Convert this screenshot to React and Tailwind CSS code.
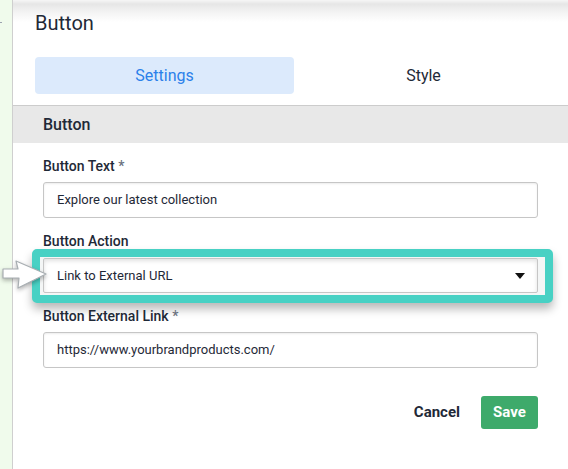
import React from "react";

function Field({ label, required, children, className = "" }) {
  return (
    <div className={className}>
      <div className="text-[14px] leading-[16px] font-medium text-[#1f2937]">
        {label}
        {required && <span className="text-[#6b7280]"> *</span>}
      </div>
      {children}
    </div>
  );
}

function TextInput({ value, className = "" }) {
  return (
    <div
      className={`h-[36px] flex items-center pl-[13px] border border-[#c6c6c6] rounded-[3px] bg-white shadow-[inset_0_1px_2px_rgba(0,0,0,0.08)] text-[13px] text-[#1f2937] ${className}`}
    >
      {value}
    </div>
  );
}

export default function App() {
  return (
    <div
      className="w-[568px] h-[469px] flex overflow-hidden bg-white relative"
      style={{ fontFamily: "Roboto, 'Liberation Sans', sans-serif" }}
    >
      {/* left strip */}
      <div className="w-[13px] shrink-0 bg-[#f0fbec] border-r border-[#cfcfcf] pt-[22px]">
        <div className="w-[2px] h-[1px] bg-[#9ca3af]" />
      </div>

      {/* main panel */}
      <div className="flex-1 flex flex-col bg-[linear-gradient(to_bottom,#f6f6f6_0px,#e6e6e6_4px,#f3f3f3_12px,#ffffff_22px)] bg-no-repeat">
        <div className="pl-[22px] pt-[11px] text-[20px] leading-[24px] text-[#1f2937]">
          Button
        </div>

        <div className="mt-[22px] ml-[22px] mr-[15px] grid grid-cols-2 h-[37px] text-[16px]">
          <div className="bg-[#dceafc] rounded-[4px] flex items-center justify-center text-[#2b80ea]">
            Settings
          </div>
          <div className="flex items-center justify-center text-[#1f2937]">Style</div>
        </div>

        <div className="mt-[11px] h-[38px] border-t border-[#cccccc] bg-[#e8e8e8] flex items-center pl-[30px] text-[16px] font-medium text-[#1f2937]">
          Button
        </div>

        <div className="px-[30px] pt-[15px] flex flex-col">
          <Field label="Button Text" required>
            <TextInput className="mt-[8px]" value="Explore our latest collection" />
          </Field>

          <Field label="Button Action" className="mt-[15px]">
            <div className="ml-[-11px] mr-[-15px] border-[8px] border-[#48d1c4] rounded-[5px] pl-[3px] pr-[7px] pt-[1px] pb-[2px] bg-[#f4f6f6] shadow-[0_6px_10px_rgba(0,0,0,0.28)]">
              <div className="h-[35px] flex items-center justify-between pl-[13px] pr-[12px] border border-[#c6c6c6] rounded-[2px] bg-white shadow-[inset_0_2px_4px_rgba(0,0,0,0.12)] text-[13px] text-[#1f2937]">
                <span>Link to External URL</span>
                <svg width="10" height="6" viewBox="0 0 10 6">
                  <path d="M0 0 L10 0 L5 6 Z" fill="#111111" />
                </svg>
              </div>
            </div>
          </Field>

          <Field label="Button External Link" required className="mt-[5px]">
            <TextInput className="mt-[8px]" value="https://www.yourbrandproducts.com/" />
          </Field>

          <div className="mt-[28px] flex items-center justify-end gap-[21px]">
            <span className="text-[15px] font-bold text-[#1f2937]">Cancel</span>
            <div className="w-[57px] h-[33px] rounded-[3px] bg-[#3eaa6b] flex items-center justify-center text-[15px] font-bold text-white">
              Save
            </div>
          </div>
        </div>
      </div>

      {/* pointer arrow */}
      <svg
        className="absolute left-0 top-[258px]"
        width="52"
        height="34"
        viewBox="0 258 52 34"
        style={{ filter: "drop-shadow(0 2px 2px rgba(0,0,0,0.3))" }}
      >
        <path
          d="M3 269 L18 269 L16 261 L46 274 L18 288 L19 278 L3 278 Z"
          fill="#ffffff"
          stroke="#a8aeb2"
          strokeWidth="1.2"
          strokeLinejoin="round"
        />
      </svg>
    </div>
  );
}
